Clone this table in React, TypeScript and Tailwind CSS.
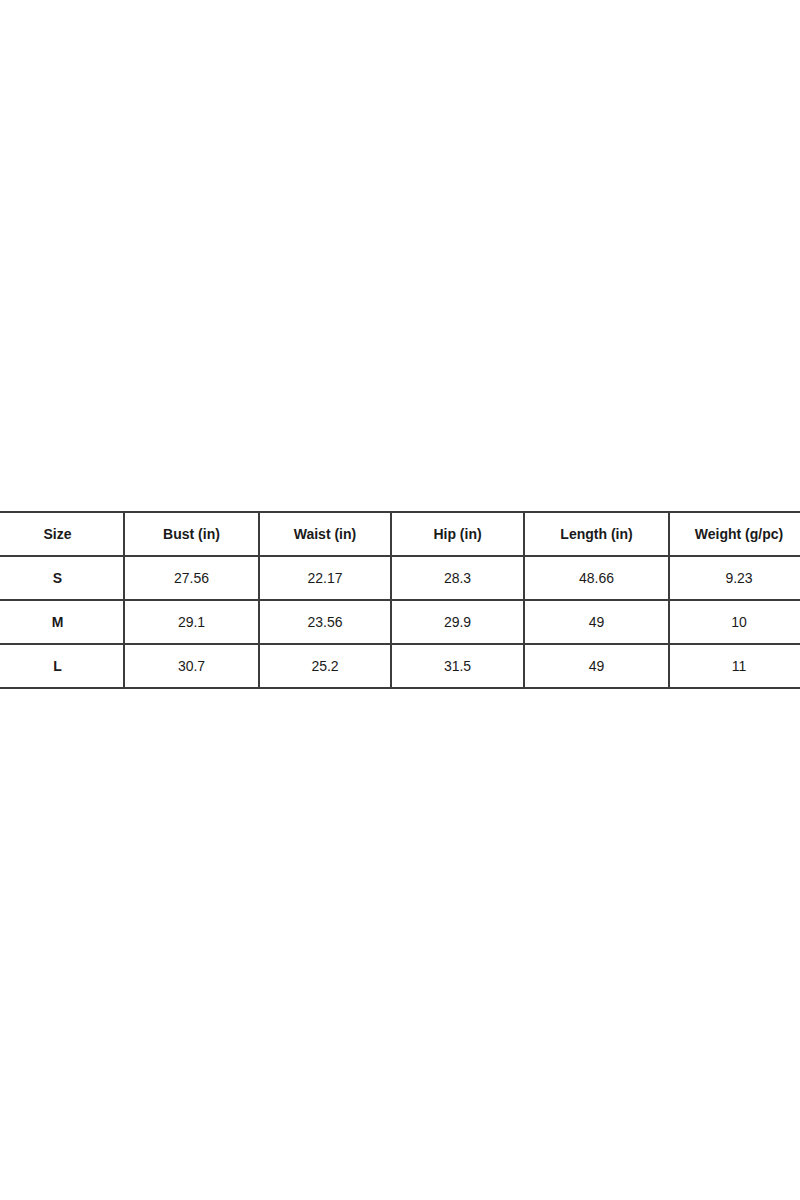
import React from 'react';

const headers = ['Size', 'Bust (in)', 'Waist (in)', 'Hip (in)', 'Length (in)', 'Weight (g/pc)'];

const rows = [
  ['S', '27.56', '22.17', '28.3', '48.66', '9.23'],
  ['M', '29.1', '23.56', '29.9', '49', '10'],
  ['L', '30.7', '25.2', '31.5', '49', '11'],
];

// column widths incl. the 2px right border
const widths = ['w-[133px]', 'w-[135px]', 'w-[132px]', 'w-[133px]', 'w-[145px]', 'w-[138px]'];

const App = () => {
  return (
    <div className="w-[800px] h-[1200px] bg-white overflow-hidden flex flex-col justify-center" style={{ fontFamily: '"Liberation Sans", Arial, sans-serif' }}>
      <div className="-ml-[8px] w-[816px] border-t-2 border-[#3c3c3c]">
        <div className="flex">
          {headers.map((h, i) => (
            <div
              key={h}
              className={`${widths[i]} h-[44px] shrink-0 flex items-center justify-center border-b-2 border-[#3c3c3c] text-[14px] font-semibold text-[#1a1a1a] ${i < 5 ? 'border-r-2' : ''}`}
            >
              {h}
            </div>
          ))}
        </div>
        {rows.map((r) => (
          <div key={r[0]} className="flex">
            {r.map((c, i) => (
              <div
                key={i}
                className={`${widths[i]} h-[44px] shrink-0 flex items-center justify-center border-b-2 border-[#3c3c3c] text-[14px] text-[#1a1a1a] ${i === 0 ? 'font-semibold' : ''} ${i < 5 ? 'border-r-2' : ''}`}
              >
                {c}
              </div>
            ))}
          </div>
        ))}
      </div>
    </div>
  );
};

export default App;
